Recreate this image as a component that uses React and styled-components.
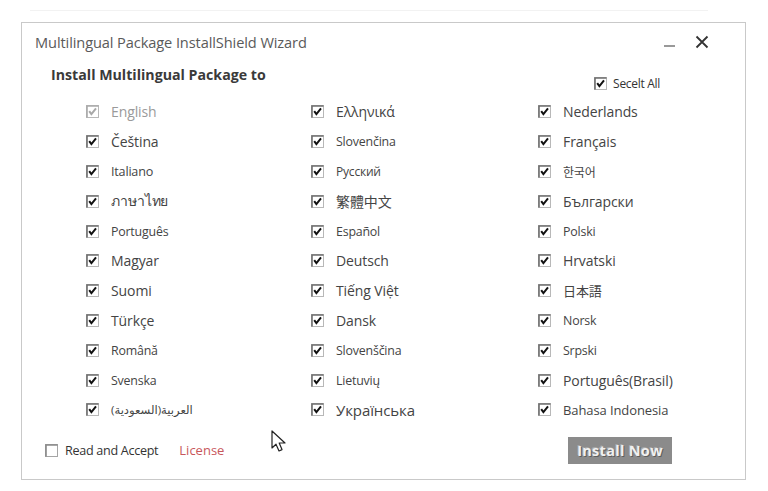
import React from 'react';
import styled, { createGlobalStyle } from 'styled-components';

const GlobalStyle = createGlobalStyle`
  html, body {
    margin: 0;
    padding: 0;
    background: #ffffff;
  }
  body {
    font-family: "Open Sans", "Noto Sans", "Noto Sans CJK SC", sans-serif;
    color: #444;
  }
`;

const languages = [
  [
    { name: 'English', size: 14, disabled: true },
    { name: 'Čeština', size: 14 },
    { name: 'Italiano', size: 12.6 },
    { name: 'ภาษาไทย', size: 14 },
    { name: 'Português', size: 12.4 },
    { name: 'Magyar', size: 14 },
    { name: 'Suomi', size: 14 },
    { name: 'Türkçe', size: 14 },
    { name: 'Română', size: 12.4 },
    { name: 'Svenska', size: 12.4 },
    { name: 'العربية(السعودية)', size: 11.6 },
  ],
  [
    { name: 'Ελληνικά', size: 14 },
    { name: 'Slovenčina', size: 12.4 },
    { name: 'Русский', size: 12 },
    { name: '繁體中文', size: 14, cjk: 'TC' },
    { name: 'Español', size: 12.4 },
    { name: 'Deutsch', size: 14 },
    { name: 'Tiếng Việt', size: 14 },
    { name: 'Dansk', size: 14 },
    { name: 'Slovenščina', size: 12.4 },
    { name: 'Lietuvių', size: 12.4 },
    { name: 'Українська', size: 15 },
  ],
  [
    { name: 'Nederlands', size: 14 },
    { name: 'Français', size: 14 },
    { name: '한국어', size: 12, cjk: 'KR' },
    { name: 'Български', size: 14 },
    { name: 'Polski', size: 12.4 },
    { name: 'Hrvatski', size: 14 },
    { name: '日本語', size: 13, cjk: 'JP' },
    { name: 'Norsk', size: 12.4 },
    { name: 'Srpski', size: 12.4 },
    { name: 'Português(Brasil)', size: 14 },
    { name: 'Bahasa Indonesia', size: 13 },
  ],
];

const TopStrip = styled.div`
  height: 10px;
  margin: 0 60px 0 30px;
  border-bottom: 1px solid #f2f2f2;
`;

const Window = styled.div`
  position: relative;
  box-sizing: border-box;
  width: 725px;
  height: 458px;
  margin: 11px 0 0 21px;
  border: 1px solid #c9c9c9;
  background: #fff;
  display: flex;
  flex-direction: column;
`;

const TitleBar = styled.div`
  display: flex;
  align-items: center;
  height: 38px;
  padding: 0 36px 0 13px;
`;

const Title = styled.div`
  flex: 1;
  font-size: 14.6px;
  color: #5a5a5a;
  letter-spacing: -0.1px;
`;

const WinButton = styled.button`
  border: 0;
  background: none;
  padding: 0;
  margin-left: 18px;
  width: 14px;
  height: 14px;
  display: flex;
  align-items: center;
  justify-content: center;
`;

const HeadRow = styled.div`
  display: flex;
  justify-content: space-between;
  align-items: flex-start;
  height: 36px;
  padding: 4px 83px 0 29px;
  box-sizing: border-box;
`;

const Heading = styled.div`
  font-weight: 700;
  font-size: 14.2px;
  color: #3a3a3a;
`;

const SelectAll = styled.label`
  display: flex;
  align-items: center;
  gap: 6px;
  font-size: 12px;
  color: #333;
  margin-top: 10px;
  margin-right: 2px;
  letter-spacing: -0.3px;
`;

const Grid = styled.div`
  display: grid;
  grid-template-columns: 225px 227px 1fr;
  grid-auto-rows: 29.8px;
  padding-left: 64px;
`;

const Item = styled.label`
  display: flex;
  align-items: center;
  gap: 12px;
  font-size: ${p => p.$size}px;
  color: ${p => (p.$disabled ? '#9a9a9a' : '#444')};
  font-family: ${p =>
    p.$cjk
      ? `"Noto Sans CJK ${p.$cjk}", "Noto Sans", sans-serif`
      : '"Open Sans", "Noto Sans", "DejaVu Sans", sans-serif'};
  white-space: nowrap;
  letter-spacing: ${p => (p.$size < 13 ? '-0.2px' : '-0.1px')};
`;

const Footer = styled.div`
  display: flex;
  align-items: center;
  padding: 12px 73px 0 23px;
`;

const Accept = styled.label`
  display: flex;
  align-items: center;
  gap: 7px;
  font-size: 12.6px;
  color: #333;
  letter-spacing: -0.3px;
`;

const LicenseLink = styled.a`
  margin-left: 21px;
  font-size: 13px;
  color: #c8575c;
  text-decoration: none;
`;

const Spacer = styled.div`
  flex: 1;
`;

const InstallButton = styled.button`
  width: 104px;
  height: 27px;
  border: 0;
  background: #8b8b8b;
  color: #f0f0f0;
  font-family: "Open Sans", "Noto Sans", sans-serif;
  font-weight: 700;
  font-size: 14.5px;
  letter-spacing: 0.3px;
  text-shadow: 1px 1px 0 #5e5e5e, -1px -1px 0 #a8a8a8;
  padding: 0;
`;

const Cursor = styled.svg`
  position: absolute;
  left: 249px;
  top: 407px;
`;

const Box = ({ checked = true, disabled = false, empty = false }) => (
  <svg width="13" height="13" viewBox="0 0 13 13" style={{ flex: 'none' }}>
    <rect x="0.5" y="0.5" width="12" height="12" fill="#fff" stroke={empty ? '#a5a5a5' : '#b8b8b8'} />
    <path d="M1 12.5V1H12.5" fill="none" stroke={empty ? '#8a8a8a' : disabled ? '#aaa' : '#6e6e6e'} strokeWidth="1.6" />
    {checked && (
      <path
        d="M3.2 6.2L5.4 9.2L10 3.4"
        fill="none"
        stroke={disabled ? '#a8a8a8' : '#111'}
        strokeWidth="2"
      />
    )}
  </svg>
);

export default function App() {
  const rows = [];
  for (let r = 0; r < 11; r++) {
    for (let c = 0; c < 3; c++) {
      rows.push(languages[c][r]);
    }
  }

  return (
    <>
      <GlobalStyle />
      <TopStrip />
      <Window>
        <TitleBar>
          <Title>Multilingual Package InstallShield Wizard</Title>
          <WinButton aria-label="minimize">
            <svg width="12" height="14" viewBox="0 0 12 14">
              <path d="M0 11H11" stroke="#555" strokeWidth="1.2" />
            </svg>
          </WinButton>
          <WinButton aria-label="close">
            <svg width="14" height="14" viewBox="0 0 14 14">
              <path d="M1.5 1.5L12.5 12.5M12.5 1.5L1.5 12.5" stroke="#333" strokeWidth="1.8" />
            </svg>
          </WinButton>
        </TitleBar>
        <HeadRow>
          <Heading>Install Multilingual Package to</Heading>
          <SelectAll>
            <Box />
            Secelt All
          </SelectAll>
        </HeadRow>
        <Grid>
          {rows.map(l => (
            <Item key={l.name} $size={l.size} $disabled={l.disabled} $cjk={l.cjk}>
              <Box disabled={l.disabled} />
              <span>{l.name}</span>
            </Item>
          ))}
        </Grid>
        <Footer>
          <Accept>
            <Box checked={false} empty />
            Read and Accept
          </Accept>
          <LicenseLink href="#">License</LicenseLink>
          <Spacer />
          <InstallButton>Install Now</InstallButton>
        </Footer>
        <Cursor width="17" height="24" viewBox="0 0 17 24">
          <path
            d="M1 1V18L5 14.2L8 21L11 19.6L8.2 13H14Z"
            fill="#fff"
            stroke="#222"
            strokeWidth="1.2"
            strokeLinejoin="round"
          />
        </Cursor>
      </Window>
    </>
  );
}
